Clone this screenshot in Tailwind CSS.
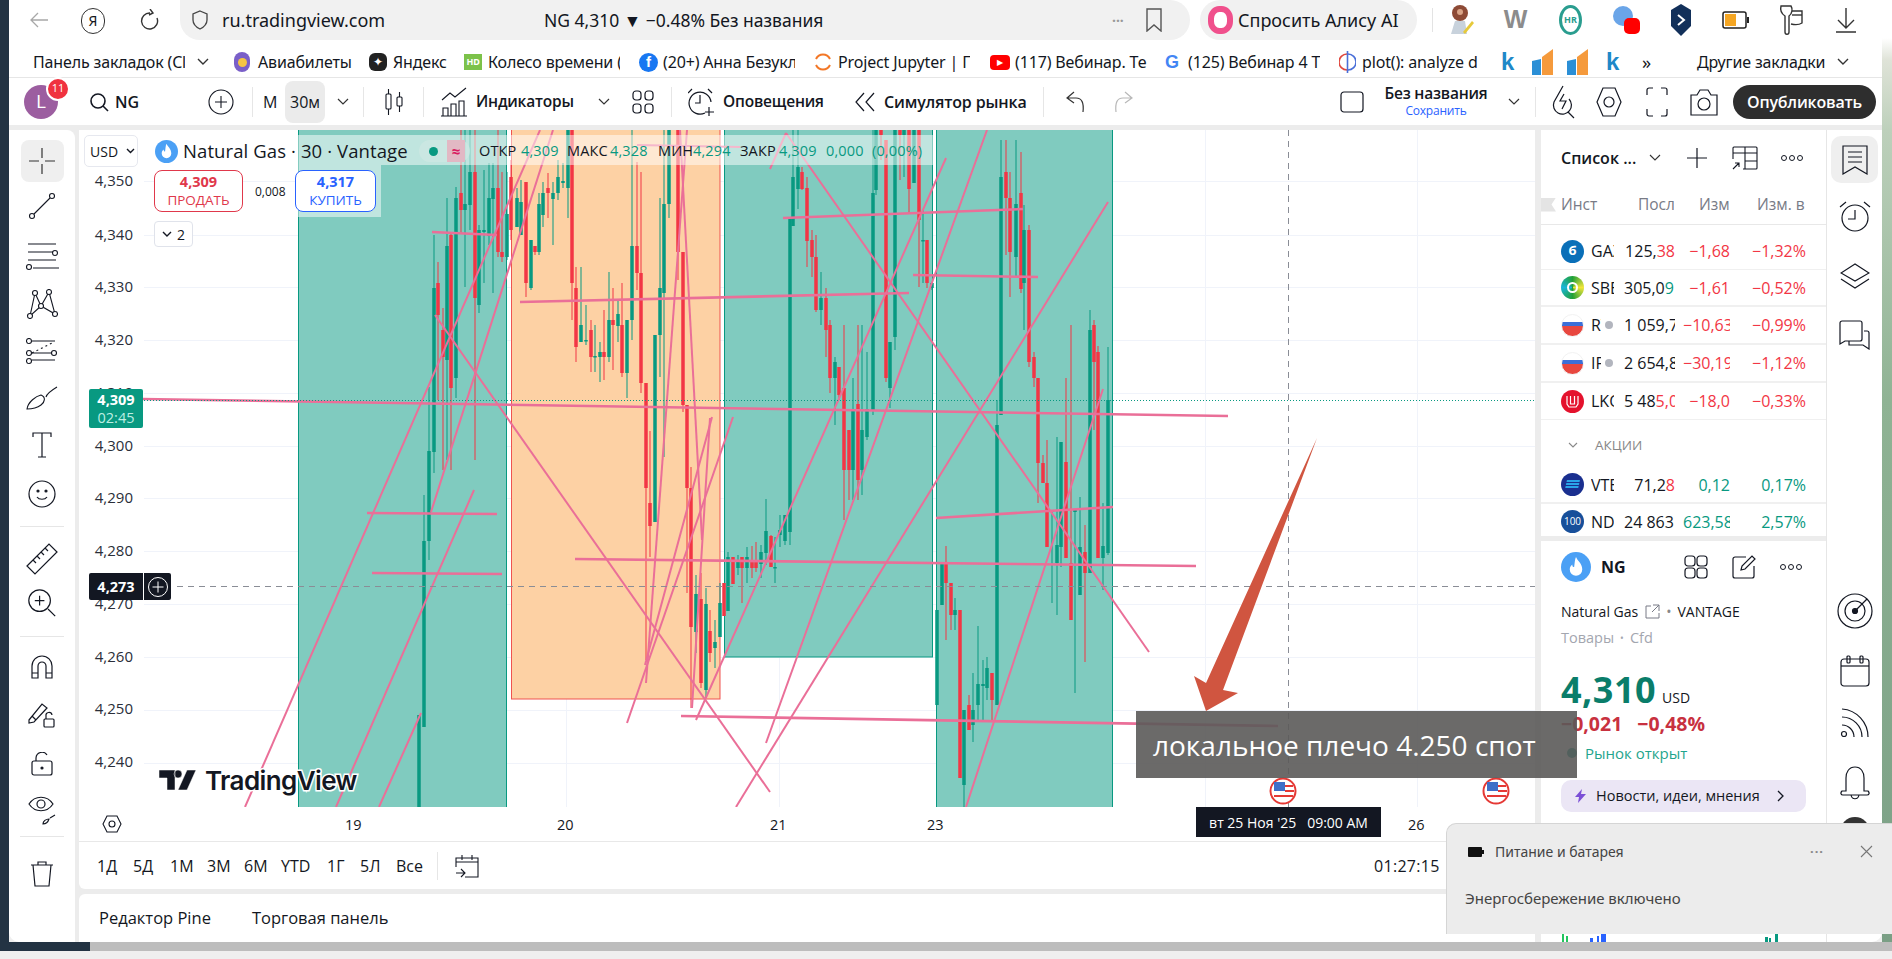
<!DOCTYPE html>
<html lang="ru">

<head>
  <meta charset="UTF-8">
  <title>NG 4,310</title>
  <script src="https://cdn.jsdelivr.net/npm/@tailwindcss/browser@4"></script>
</head>

<body class="relative w-[1892px] h-[959px] overflow-hidden bg-[#efefef] font-['Open_Sans',sans-serif] text-[#131722]">
  <div class="flex h-[942px]">
    <div class="w-[9px] bg-[#233343]"></div>

    <!-- browser window -->
    <div class="w-[1873px] flex flex-col bg-[#ececec] rounded-bl-[10px] rounded-br-[10px] overflow-hidden">
      <!-- tab row -->
      <div class="h-[45px] shrink-0 bg-white flex items-start font-['Noto_Sans',sans-serif]">
        <svg class="ml-[19px] mt-[10px] w-[22px] h-[20px]" viewBox="0 0 22 20" fill="none" stroke="#a8a8a8" stroke-width="1.3"><path d="M20 10H3M10 3l-7 7 7 7" /></svg>
        <div class="ml-[31px] mt-[8px] w-[24px] h-[26px] rounded-full border-[1.5px] border-[#333] flex items-center justify-center text-[14px] leading-none">Я</div>
        <svg class="ml-[35px] mt-[9px] w-[20px] h-[24px]" viewBox="0 0 20 24" fill="none" stroke="#333" stroke-width="1.4"><path d="M10 4a8 8 0 1 0 7 5M10 0l3 4-4 2" /></svg>
        <div class="ml-[20px] w-[1010px] h-[40px] rounded-r-[20px] rounded-bl-[20px] bg-[#f1f1f1] flex items-center">
          <svg class="ml-[12px] w-[16px] h-[20px]" viewBox="0 0 16 20" fill="none" stroke="#444" stroke-width="1.3"><path d="M8 1l7 3v6c0 4-3 7-7 9-4-2-7-5-7-9V4z" /></svg>
          <span class="ml-[14px] w-[322px] text-[18px]">ru.tradingview.com</span>
          <span class="w-[568px] text-[17.500px]">NG 4,310 ▼ −0.48% Без названия</span>
          <span class="w-[34px] text-[#999] text-[14px] font-bold">···</span>
          <svg class="w-[16px] h-[24px]" viewBox="0 0 16 24" fill="none" stroke="#555" stroke-width="1.4"><path d="M1 1h14v22l-7-6-7 6z" /></svg>
        </div>
        <div class="ml-[10px] w-[217px] h-[40px] rounded-[20px] bg-[#f1f1f1] flex items-center">
          <div class="ml-[8px] w-[25px] h-[28px] rounded-[45%] border-[6px] border-[#f0508c] bg-white"></div>
          <span class="ml-[5px] text-[18px] whitespace-nowrap">Спросить Алису AI</span>
        </div>
        <div class="ml-[15px] mt-[8px] w-px h-[24px] bg-[#e3e3e3]"></div>
        <div class="w-[55px] h-[40px] flex items-center justify-center"><svg class="w-[28px] h-[32px]" viewBox="0 0 28 32"><circle cx="13" cy="9" r="8" fill="#8d4a35" /><circle cx="13" cy="8" r="3" fill="#d9a487" /><path d="M4 30l4-13h10l2 13z" fill="#c8d2dc" /><path d="M16 28l9-11 2 2-9 11z" fill="#e6c93a" /></svg></div>
        <div class="w-[55px] h-[40px] flex items-center justify-center"><span class="text-[25px] font-bold text-[#8c8c8c] font-['Liberation_Sans',sans-serif]">W</span></div>
        <div class="w-[55px] h-[40px] flex items-center justify-center"><div class="w-[23px] h-[30px] rounded-[50%] border-[3px] border-[#2a9d8f] text-[9px] font-bold text-[#2a9d8f] flex items-center justify-center">HR</div></div>
        <div class="w-[55px] h-[40px] flex items-center justify-center"><svg class="w-[30px] h-[30px]" viewBox="0 0 30 30"><circle cx="12" cy="11" r="10" fill="#6aa5e8" /><rect x="13" y="13" width="16" height="16" rx="5" fill="#f00" /></svg></div>
        <div class="w-[55px] h-[40px] flex items-center justify-center"><svg class="w-[22px] h-[32px]" viewBox="0 0 22 32"><path d="M11 0l10 6v16l-10 10L1 22V6z" fill="#12305a" /><path d="M8 11l6 5-6 5" fill="none" stroke="#fff" stroke-width="2" /></svg></div>
        <div class="w-[55px] h-[40px] flex items-center justify-center"><svg class="w-[28px] h-[18px]" viewBox="0 0 28 18"><rect x="1" y="1" width="23" height="16" rx="2" fill="#fff" stroke="#222" stroke-width="1.5" /><rect x="3" y="3" width="11" height="12" fill="#f5a623" /><rect x="25" y="6" width="2" height="6" fill="#222" /></svg></div>
        <div class="w-[55px] h-[40px] flex items-center justify-center"><svg class="w-[26px] h-[32px]" viewBox="0 0 26 32" fill="none" stroke="#333" stroke-width="1.4"><path d="M3 2h10c2 3 1 8-2 10v16c0 3-4 3-4 0V12C4 10 2 6 3 2zM14 7h10v12c-3 2-7 2-11 1" /><path d="M14 11h10" /></svg></div>
        <div class="w-[55px] h-[40px] flex items-center justify-center"><svg class="w-[22px] h-[26px]" viewBox="0 0 22 26" fill="none" stroke="#333" stroke-width="1.4"><path d="M11 1v20M3 13l8 8 8-8M1 25h20" /></svg></div>
      </div>

      <!-- bookmarks -->
      <div class="h-[33px] pt-[2px] shrink-0 bg-white border-b border-[#e6e6e6] flex items-center text-[16px] font-['Noto_Sans',sans-serif] tracking-[-0.15px] whitespace-nowrap">
        <div class="w-[225px] pl-[24px] flex items-center"><span class="w-[152px] overflow-hidden">Панель закладок (Cl</span><svg class="ml-[12px] w-[12px] h-[8px]" viewBox="0 0 12 8" fill="none" stroke="#333" stroke-width="1.4"><path d="M1 1l5 5 5-5" /></svg></div>
        <div class="w-[135px] flex items-center gap-[8px]"><div class="w-[16px] h-[20px] rounded-full bg-[#7a5fc8] flex items-center justify-center"><div class="w-[9px] h-[9px] rounded-full bg-[#f5c542]"></div></div><span>Авиабилеты</span></div>
        <div class="w-[95px] flex items-center gap-[6px]"><div class="w-[18px] h-[18px] rounded-[6px] bg-[#222] text-white text-[12px] leading-none flex items-center justify-center">✦</div><span>Яндекс</span></div>
        <div class="w-[175px] flex items-center gap-[6px]"><div class="w-[18px] h-[16px] bg-[#7cc24a] text-white text-[9px] font-bold flex items-center justify-center">HD</div><span class="w-[132px] overflow-hidden">Колесо времени (</span></div>
        <div class="w-[175px] flex items-center gap-[5px]"><div class="w-[19px] h-[19px] rounded-full bg-[#1877f2] text-white text-[15px] font-bold flex items-center justify-center font-['Liberation_Sans',sans-serif]">f</div><span class="w-[132px] overflow-hidden">(20+) Анна Безукл</span></div>
        <div class="w-[176px] flex items-center gap-[6px]"><svg class="w-[18px] h-[20px]" viewBox="0 0 18 20" fill="none" stroke="#f37726" stroke-width="2"><path d="M2 7c3-6 11-6 14 0M2 13c3 6 11 6 14 0" /></svg><span class="w-[132px] overflow-hidden">Project Jupyter | П</span></div>
        <div class="w-[175px] flex items-center gap-[5px]"><div class="w-[20px] h-[15px] rounded-[4px] bg-[#f00] text-white text-[8px] flex items-center justify-center">▶</div><span class="w-[133px] overflow-hidden">(117) Вебинар. Те</span></div>
        <div class="w-[174px] flex items-center gap-[6px]"><span class="w-[17px] text-[18px] font-bold text-[#4285f4] leading-none font-['Liberation_Sans',sans-serif]">G</span><span class="w-[132px] overflow-hidden">(125) Вебинар 4 Т</span></div>
        <div class="w-[151px] flex items-center gap-[6px]"><svg class="w-[17px] h-[24px]" viewBox="0 0 17 24" fill="none" stroke-width="1.6"><path d="M8 4a8 8 0 0 0 0 16" stroke="#e0483e" /><path d="M9 4a8 8 0 0 1 0 16" stroke="#4a6fd8" /><path d="M8.500 1v22" stroke="#4a6fd8" /></svg><span class="w-[118px] overflow-hidden">plot(): analyze d</span></div>
        <div class="w-[35px] text-center text-[24px] font-bold text-[#1e88c8] leading-none font-['Liberation_Sans',sans-serif]">k</div>
        <div class="w-[35px] flex justify-center"><svg class="w-[22px] h-[26px]" viewBox="0 0 22 26"><path d="M0 12l9-2v16H0z" fill="#2b8fd6" /><path d="M10 26V8l11-8v26z" fill="#f59a3c" /></svg></div>
        <div class="w-[35px] flex justify-center"><svg class="w-[22px] h-[26px]" viewBox="0 0 22 26"><path d="M0 12l9-2v16H0z" fill="#2b8fd6" /><path d="M10 26V8l11-8v26z" fill="#f59a3c" /></svg></div>
        <div class="w-[35px] text-center text-[24px] font-bold text-[#1e88c8] leading-none font-['Liberation_Sans',sans-serif]">k</div>
        <div class="w-[67px] pl-[12px] text-[18px] leading-none">»</div>
        <div class="flex items-center gap-[6px]"><span class="w-[134px]">Другие закладки</span><svg class="w-[12px] h-[8px]" viewBox="0 0 12 8" fill="none" stroke="#333" stroke-width="1.4"><path d="M1 1l5 5 5-5" /></svg></div>
      </div>

      <!-- chart toolbar -->
      <div class="h-[47px] shrink-0 bg-white flex items-center text-[16px] font-semibold whitespace-nowrap">
        <div class="relative ml-[15px] w-[34px] h-[34px] rounded-full bg-[#9c5ea0] text-white text-[19px] font-normal flex items-center justify-center">L
          <div class="absolute left-[22px] top-[-8px] w-[24px] h-[24px] rounded-full bg-[#f0323f] border-[2px] border-white text-[11px] font-normal flex items-center justify-center">11</div>
        </div>
        <svg class="ml-[31px] w-[20px] h-[20px]" viewBox="0 0 20 20" fill="none" stroke="#131722" stroke-width="1.6"><circle cx="9" cy="9" r="7" /><path d="M14 14l5 5" /></svg>
        <span class="ml-[6px] w-[28px]">NG</span>
        <svg class="ml-[65px] w-[26px] h-[26px]" viewBox="0 0 26 26" fill="none" stroke="#131722" stroke-width="1.1"><circle cx="13" cy="13" r="12" /><path d="M13 7v12M7 13h12" /></svg>
        <div class="ml-[18px] w-px h-[30px] bg-[#e6e6e6]"></div>
        <span class="ml-[10px] w-[22px] font-normal">М</span>
        <div class="h-[42px] w-[40px] rounded-[8px] bg-[#ebebeb] flex items-center justify-center font-normal">30м</div>
        <svg class="ml-[12px] w-[12px] h-[8px]" viewBox="0 0 12 8" fill="none" stroke="#333" stroke-width="1.2"><path d="M1 1l5 5 5-5" /></svg>
        <div class="ml-[14px] w-px h-[30px] bg-[#e6e6e6]"></div>
        <svg class="ml-[20px] w-[20px] h-[30px]" viewBox="0 0 20 30" fill="none" stroke="#131722" stroke-width="1.1"><rect x="2" y="7" width="5" height="15" rx="1" /><path d="M4.500 2v5M4.500 22v6" /><rect x="13" y="10" width="5" height="9" rx="1" /><path d="M15.500 5v5M15.500 19v6" /></svg>
        <div class="ml-[19px] w-px h-[30px] bg-[#e6e6e6]"></div>
        <svg class="ml-[16px] w-[28px] h-[30px]" viewBox="0 0 28 30" fill="none" stroke="#131722" stroke-width="1.1"><path d="M2 13l8-7 5 4 11-9M3 29v-8h5v8zM11 29V17h5v12zM19 29V14h5v15zM1 29h26" /></svg>
        <span class="ml-[8px] w-[122px] font-semibold text-[15.5px] tracking-[-0.2px]">Индикаторы</span>
        <svg class="w-[12px] h-[8px]" viewBox="0 0 12 8" fill="none" stroke="#333" stroke-width="1.2"><path d="M1 1l5 5 5-5" /></svg>
        <svg class="ml-[22px] w-[22px] h-[26px]" viewBox="0 0 22 26" fill="none" stroke="#131722" stroke-width="1.2"><rect x="1" y="2" width="8" height="9" rx="3" /><rect x="13" y="2" width="8" height="9" rx="3" /><rect x="1" y="15" width="8" height="9" rx="3" /><rect x="13" y="15" width="8" height="9" rx="3" /></svg>
        <div class="ml-[17px] w-px h-[30px] bg-[#e6e6e6]"></div>
        <svg class="ml-[16px] w-[26px] h-[30px]" viewBox="0 0 26 30" fill="none" stroke="#131722" stroke-width="1.2"><path d="M17 26A11 11 0 1 1 23 15M12 8v8H7M4 2L0 6M20 2l4 4M21 20v9M17 25h9" /></svg>
        <span class="ml-[9px] w-[132px] text-[15.5px] tracking-[-0.2px]">Оповещения</span>
        <svg class="w-[20px] h-[22px]" viewBox="0 0 20 22" fill="none" stroke="#131722" stroke-width="1.2"><path d="M9 2L1 11l8 9M19 2l-8 9 8 9" /></svg>
        <span class="ml-[9px] w-[159px] text-[16px] tracking-[-0.15px]">Симулятор рынка</span>
        <div class="w-px h-[30px] bg-[#e6e6e6]"></div>
        <svg class="ml-[22px] w-[20px] h-[22px]" viewBox="0 0 20 22" fill="none" stroke="#333" stroke-width="1.2"><path d="M8 1L1 7l7 5M1 7h9c6 0 8 5 7 14" /></svg>
        <svg class="ml-[27px] w-[20px] h-[22px]" viewBox="0 0 20 22" fill="none" stroke="#b8b8b8" stroke-width="1.2"><path d="M12 1l7 6-7 5M19 7h-9C4 7 2 12 3 21" /></svg>
        <svg class="ml-[207px] w-[24px] h-[22px]" viewBox="0 0 24 22" fill="none" stroke="#131722" stroke-width="1.2"><rect x="1" y="1" width="22" height="20" rx="3" /></svg>
        <div class="ml-[19px] w-[106px] flex flex-col items-center leading-none">
          <span class="text-[15.5px] tracking-[-0.2px]">Без названия</span>
          <span class="mt-[3px] text-[12px] font-normal text-[#2962ff] tracking-[-0.2px]">Сохранить</span>
        </div>
        <svg class="ml-[19px] w-[12px] h-[8px]" viewBox="0 0 12 8" fill="none" stroke="#333" stroke-width="1.2"><path d="M1 1l5 5 5-5" /></svg>
        <div class="ml-[15px] w-px h-[30px] bg-[#e6e6e6]"></div>
        <svg class="ml-[15px] w-[24px] h-[34px]" viewBox="0 0 24 34" fill="none" stroke="#131722" stroke-width="1.2"><path d="M12 1L3 17a9 9 0 1 0 15-3M13 9l-4 7h6l-4 8M17 27l6 6" /></svg>
        <svg class="ml-[21px] w-[26px] h-[30px]" viewBox="0 0 26 30" fill="none" stroke="#131722" stroke-width="1.2"><path d="M7 1h12l6 14-6 14H7L1 15z" /><circle cx="13" cy="15" r="5" /></svg>
        <svg class="ml-[24px] w-[22px] h-[30px]" viewBox="0 0 22 30" fill="none" stroke="#131722" stroke-width="1.2"><path d="M1 8V3a2 2 0 0 1 2-2h4M15 1h4a2 2 0 0 1 2 2v5M21 22v5a2 2 0 0 1-2 2h-4M7 29H3a2 2 0 0 1-2-2v-5" /></svg>
        <svg class="ml-[22px] w-[28px] h-[30px]" viewBox="0 0 28 30" fill="none" stroke="#131722" stroke-width="1.2"><path d="M1 8h6l3-5h8l3 5h6v20H1z" /><circle cx="14" cy="17" r="6" /></svg>
        <div class="ml-[15px] w-[143px] h-[34px] rounded-[17px] bg-[#2e2e2e] text-white text-[16px] flex items-center justify-center tracking-[-0.2px]">Опубликовать</div>
      </div>

      <!-- main row -->
      <div class="flex flex-1 mt-[5px] min-h-0">
        <!-- drawing tools -->
        <div class="w-[66px] shrink-0 bg-white rounded-tr-[8px] flex flex-col items-center">
          <div class="mt-[10px] w-[43px] h-[42px] rounded-[8px] bg-[#efefef] flex items-center justify-center"><svg class="w-[28px] h-[28px]" viewBox="0 0 28 28" fill="none" stroke="#333" stroke-width="1.2"><path d="M14 1v10M14 17v10M1 14h10M17 14h10" /></svg></div>
          <svg class="mt-[9px] w-[30px] h-[30px]" viewBox="0 0 30 30" fill="none" stroke="#131722" stroke-width="1.1"><circle cx="5" cy="25" r="2.500" /><circle cx="25" cy="5" r="2.500" /><path d="M7 23L23 7" /></svg>
          <svg class="mt-[20px] w-[34px] h-[30px]" viewBox="0 0 34 30" fill="none" stroke="#131722" stroke-width="1.1"><path d="M3 3h28M3 11h26M3 19h28M8 27h26" /><circle cx="30" cy="12" r="2.500" fill="#fff" /><circle cx="4" cy="26" r="2.500" fill="#fff" /></svg>
          <svg class="mt-[18px] w-[32px] h-[30px]" viewBox="0 0 32 30" fill="none" stroke="#131722" stroke-width="1.1"><path d="M4 27L9 4l6 13 8-14 6 22-14-8z" /><circle cx="4" cy="27" r="2.500" fill="#fff" /><circle cx="9" cy="4" r="2.500" fill="#fff" /><circle cx="15" cy="17" r="2.500" fill="#fff" /><circle cx="23" cy="3" r="2.500" fill="#fff" /><circle cx="29" cy="25" r="2.500" fill="#fff" /></svg>
          <svg class="mt-[19px] w-[32px] h-[28px]" viewBox="0 0 32 28" fill="none" stroke="#131722" stroke-width="1.1"><path d="M6 3h23M6 22h23M6 15h20" /><path d="M6 15l22-11" stroke-dasharray="2 3" /><circle cx="3" cy="3" r="2.500" fill="#fff" /><circle cx="3" cy="15" r="2.500" fill="#fff" /><circle cx="28" cy="15" r="2.500" fill="#fff" /><circle cx="3" cy="23" r="2.500" fill="#fff" /></svg>
          <svg class="mt-[20px] w-[32px] h-[24px]" viewBox="0 0 32 24" fill="none" stroke="#131722" stroke-width="1.1"><path d="M1 23c1-7 9-13 14-14 5 2 4 7 0 10-4 3-9 4-14 4zM20 11c1-4 6-7 11-10" /></svg>
          <svg class="mt-[22px] w-[22px] h-[26px]" viewBox="0 0 22 26" fill="none" stroke="#131722" stroke-width="1.2"><path d="M2 5V1h18v4M11 1v24M7 25h8" /></svg>
          <svg class="mt-[22px] w-[28px] h-[28px]" viewBox="0 0 28 28" fill="none" stroke="#131722" stroke-width="1.2"><circle cx="14" cy="14" r="13" /><circle cx="10" cy="11" r="1" fill="#131722" /><circle cx="18" cy="11" r="1" fill="#131722" /><path d="M9 17c2 3 8 3 10 0" /></svg>
          <div class="mt-[18px] w-[44px] h-px bg-[#e6e6e6]"></div>
          <svg class="mt-[16px] w-[32px] h-[32px]" viewBox="0 0 32 32" fill="none" stroke="#131722" stroke-width="1.2"><path d="M1 23L23 1l8 8L9 31zM7 17l3 3M11 13l3 3M15 9l3 3M19 5l3 3" /></svg>
          <svg class="mt-[16px] w-[24px] h-[24px] scale-[1.2]" viewBox="0 0 24 24" fill="none" stroke="#131722" stroke-width="1"><circle cx="10" cy="10" r="9" /><path d="M10 6v8M6 10h8M17 17l6 6" /></svg>
          <div class="mt-[21px] w-[44px] h-px bg-[#e6e6e6]"></div>
          <svg class="mt-[18px] w-[22px] h-[24px]" viewBox="0 0 22 24" fill="none" stroke="#131722" stroke-width="1.2"><path d="M1 23V11a10 10 0 0 1 20 0v12h-6V11a4 4 0 0 0-8 0v12zM1 18h6M15 18h6" /></svg>
          <svg class="mt-[22px] w-[28px] h-[28px]" viewBox="0 0 28 28" fill="none" stroke="#131722" stroke-width="1.2"><path d="M1 19L14 3l5 4-13 14-5 1zM4 15l4 4" /><rect x="16" y="18" width="10" height="8" rx="1" /><path d="M18 18v-3a3 3 0 0 1 6-1" /></svg>
          <svg class="mt-[23px] w-[22px] h-[24px]" viewBox="0 0 22 24" fill="none" stroke="#131722" stroke-width="1.2"><rect x="1" y="9" width="20" height="14" rx="2" /><path d="M5 9V6a6 6 0 0 1 11-3" /><circle cx="11" cy="16" r="1" fill="#131722" /></svg>
          <svg class="mt-[19px] w-[28px] h-[30px]" viewBox="0 0 28 30" fill="none" stroke="#131722" stroke-width="1.2"><path d="M1 9c6-9 18-9 24 0-6 9-18 9-24 0z" /><circle cx="13" cy="9" r="4" /><path d="M15 29c0-3 3-5 6-5-1 3-3 5-6 5zM22 23l5-3" /></svg>
          <div class="mt-[11px] w-[44px] h-px bg-[#e6e6e6]"></div>
          <svg class="mt-[24px] w-[24px] h-[26px]" viewBox="0 0 24 26" fill="none" stroke="#131722" stroke-width="1.2"><path d="M1 4h22M8 4V1h8v3M3 4l2 21h14l2-21" /></svg>
        </div>

        <!-- chart column -->
        <div class="w-[1456px] ml-[4px] shrink-0 flex flex-col">
          <div class="bg-white rounded-b-[6px]">
            <div class="relative h-[677px] overflow-hidden">
              <svg id="chart" class="absolute inset-0 w-[1456px] h-[677px]" viewBox="79 130 1456 677">
                <g id="grid" stroke="#f0f3fa"></g>
                <g id="boxes"></g>
                <g id="candles"></g>
                <g id="lines" stroke="#ea6f98" fill="none"></g>
                <path d="M144 400.500H1535" stroke="#089981" stroke-dasharray="1 2" />
                <path d="M177 586.500H1535M1288.500 130V807" stroke="#8a8d96" stroke-dasharray="6 5" />
                <g id="flags"></g>
                <g class="text-[15px]" fill="#2a2e39" text-anchor="end">
                  <text x="133" y="186">4,350</text>
                  <text x="133" y="240">4,340</text>
                  <text x="133" y="292">4,330</text>
                  <text x="133" y="345">4,320</text>
                  <text x="133" y="398">4,310</text>
                  <text x="133" y="451">4,300</text>
                  <text x="133" y="503">4,290</text>
                  <text x="133" y="556">4,280</text>
                  <text x="133" y="609">4,270</text>
                  <text x="133" y="662">4,260</text>
                  <text x="133" y="714">4,250</text>
                  <text x="133" y="767">4,240</text>
                </g>
                <path d="M159 770h16v20h-8v-12h-8zM178 770a4 4 0 1 1 0 8 4 4 0 0 1 0-8zM187 770h9l-9 20h-9z" fill="#131722" stroke="#fff" stroke-width="0.5" />
                <text x="205" y="790" class="text-[26px] font-semibold tracking-[-0.6px] font-['Inter',sans-serif]" fill="#131722" stroke="#fff" stroke-width="3" paint-order="stroke">TradingView</text>
              </svg>

              <!-- legend -->
              <div class="absolute left-[219px] top-[5px] w-[635px] h-[30px] bg-white/50"></div>
              <div class="absolute left-[219px] top-[35px] w-[83px] h-[52px] bg-white/50"></div>
              <div class="absolute left-[5px] top-[5px] w-[54px] h-[32px] rounded-[5px] border border-[#e6e8ef] bg-white flex items-center pl-[5px] gap-[8px] text-[14px]">USD<svg class="w-[9px] h-[6px]" viewBox="0 0 9 6" fill="none" stroke="#131722" stroke-width="1.4"><path d="M1 1l3.500 3.500L8 1" /></svg></div>
              <div class="absolute left-[76px] top-[7px] h-[28px] flex items-center whitespace-nowrap">
                <svg class="w-[23px] h-[23px]" viewBox="0 0 24 24"><circle cx="12" cy="12" r="12" fill="#4ba0f5" /><path d="M12 4c1 3 5 5 5 10a5 5 0 0 1-10 0c0-2 1-3 2-4 0 2 1 2 1.500 2C11 9 11 6 12 4z" fill="#fff" /></svg>
                <span class="ml-[5px] w-[226px] text-[18.500px] tracking-[0.1px]">Natural Gas · 30 · Vantage</span>
                <div class="ml-[10px] w-[51px] h-[22px] rounded-[11px] bg-[#cfe8e3]/70 flex items-center pl-[10px]">
                  <div class="w-[9px] h-[9px] rounded-full bg-[#089981]"></div>
                  <div class="ml-[9px] w-[18px] h-[22px] bg-[#e2b8c4] text-center text-[#d81b60] text-[15px] font-bold leading-[22px]">≈</div>
                </div>
                <div class="ml-[9px] flex text-[14.500px] text-[#089981] tracking-[0.15px]">
                  <span class="w-[42px] text-[#131722]">ОТКР</span><span class="w-[46px]">4,309</span><span class="w-[43px] text-[#131722]">МАКС</span><span class="w-[48px]">4,328</span><span class="w-[35px] text-[#131722]">МИН</span><span class="w-[47px]">4,294</span><span class="w-[39px] text-[#131722]">ЗАКР</span><span class="w-[47px]">4,309</span><span class="w-[46px]">0,000</span><span>(0,00%)</span>
                </div>
              </div>

              <!-- trade buttons -->
              <div class="absolute left-[75px] top-[40px] w-[89px] h-[42px] rounded-[8px] border border-[#e0384b] bg-white flex flex-col items-center justify-center text-[#e0384b] leading-[19px]"><b class="text-[14.500px]">4,309</b><span class="text-[13.500px]">ПРОДАТЬ</span></div>
              <div class="absolute left-[176px] top-[53px] text-[12px]">0,008</div>
              <div class="absolute left-[216px] top-[40px] w-[81px] h-[42px] rounded-[8px] border border-[#2962ff] bg-white flex flex-col items-center justify-center text-[#2962ff] leading-[19px]"><b class="text-[14.500px]">4,317</b><span class="text-[13.500px]">КУПИТЬ</span></div>
              <div class="absolute left-[75px] top-[91px] w-[39px] h-[26px] rounded-[4px] border border-[#e0e3eb] bg-white flex items-center justify-center gap-[5px] text-[14px]"><svg class="w-[10px] h-[6px]" viewBox="0 0 10 6" fill="none" stroke="#131722" stroke-width="1.4"><path d="M1 1l4 4 4-4" /></svg>2</div>

              <!-- price tags -->
              <div class="absolute left-[10px] top-[259px] w-[54px] h-[39px] rounded-[2px] bg-[#089981] flex flex-col items-center justify-center leading-[18px] text-[14.500px] text-white"><b>4,309</b><span class="text-[#bdeee3]">02:45</span></div>
              <div class="absolute left-[10px] top-[443px] w-[54px] h-[27px] rounded-l-[2px] bg-[#131722] text-white text-[14.500px] font-bold flex items-center justify-center">4,273</div>
              <div class="absolute left-[65px] top-[443px] w-[27px] h-[27px] rounded-r-[2px] bg-[#131722] flex items-center justify-center"><svg class="w-[20px] h-[20px]" viewBox="0 0 20 20" fill="none" stroke="#fff"><circle cx="10" cy="10" r="9.500" /><path d="M10 4.500v11M4.500 10h11" /></svg></div>
            </div>

            <!-- time axis -->
            <div class="relative h-[35px] border-b border-[#e8e8e8] text-[14.500px]">
              <svg class="absolute left-[23px] top-[8px] w-[20px] h-[18px]" viewBox="0 0 20 18" fill="none" stroke="#131722" stroke-width="1.1"><path d="M5 1h10l4 8-4 8H5L1 9z" /><circle cx="10" cy="9" r="3" /></svg>
              <span class="absolute left-[266px] top-[7px]">19</span>
              <span class="absolute left-[478px] top-[7px]">20</span>
              <span class="absolute left-[691px] top-[7px]">21</span>
              <span class="absolute left-[848px] top-[7px]">23</span>
              <span class="absolute left-[1329px] top-[7px]">26</span>
              <div class="absolute left-[1117px] top-0 w-[185px] h-[30px] bg-[#131722] text-white text-[14px] flex items-center justify-center whitespace-pre">вт 25 Ноя '25   09:00 AM</div>
            </div>

            <!-- range row -->
            <div class="h-[47px] flex items-center text-[16px] pl-[18px]">
              <span class="w-[36px]">1Д</span><span class="w-[37px]">5Д</span><span class="w-[37px]">1М</span><span class="w-[37px]">3М</span><span class="w-[37px]">6М</span><span class="w-[46px]">YTD</span><span class="w-[33px]">1Г</span><span class="w-[36px]">5Л</span><span class="w-[41px]">Все</span>
              <div class="w-px h-[28px] bg-[#e6e6e6]"></div>
              <svg class="ml-[17px] w-[24px] h-[24px]" viewBox="0 0 24 24" fill="none" stroke="#131722" stroke-width="1.1"><path d="M1 13V4h22v19H10M1 8h22M7 1v5M17 1v5M1 19h9M6 15l4 4-4 4" /></svg>
              <span class="ml-[895px] tracking-[0.3px]">01:27:15</span>
            </div>
          </div>
          <div class="mt-[5px] flex-1 bg-white rounded-t-[6px] flex items-center pl-[20px] gap-[41px] text-[16.500px]">
            <span>Редактор Pine</span><span>Торговая панель</span>
          </div>
        </div>

        <!-- watchlist + details -->
        <div class="relative w-[285px] ml-[6px] shrink-0 flex flex-col bg-white text-[16px] whitespace-nowrap">
          <div class="h-[55px] pl-[20px] flex items-center">
            <b class="w-[88px] text-[16px] font-semibold">Список ...</b>
            <svg class="w-[12px] h-[8px]" viewBox="0 0 12 8" fill="none" stroke="#333" stroke-width="1.1"><path d="M1 1l5 5 5-5" /></svg>
            <svg class="ml-[25px] w-[22px] h-[22px]" viewBox="0 0 22 22" fill="none" stroke="#131722" stroke-width="1.2"><path d="M11 1v20M1 11h20" /></svg>
            <svg class="ml-[24px] w-[26px] h-[24px]" viewBox="0 0 26 24" fill="none" stroke="#131722" stroke-width="1.1"><path d="M1 13V2a1 1 0 0 1 1-1h22a1 1 0 0 1 1 1v20a1 1 0 0 1-1 1H11M1 7h24M13 1v22M13 15h12M1 23l6-6M3 17h4v4" /></svg>
            <div class="ml-[23px] flex gap-[2px]"><div class="w-[6px] h-[6px] rounded-full border border-[#131722]"></div><div class="w-[6px] h-[6px] rounded-full border border-[#131722]"></div><div class="w-[6px] h-[6px] rounded-full border border-[#131722]"></div></div>
          </div>
          <div class="relative h-[40px] border-b border-[#e8e8e8] flex items-center text-[15.500px] text-[#787b86]">
            <div class="w-[15px] h-[14px] bg-[#e4e4e4] [clip-path:polygon(0_0,100%_0,70%_50%,100%_100%,0_100%)]"></div>
            <span class="ml-[5px] w-[40px]">Инст</span>
            <span class="ml-[37px] w-[36px] overflow-hidden">Посл</span>
            <span class="ml-[25px] w-[32px] overflow-hidden">Изм</span>
            <span class="ml-[26px] w-[50px] overflow-hidden">Изм. в</span>
          </div>

          <div class="h-[8px]"></div>
          <div class="flex items-center h-[37px] border-b border-[#f0f0f0] pl-[20px]">
            <div class="w-[23px] h-[23px] rounded-full bg-[#0a6fb8] text-white text-[13px] font-bold flex items-center justify-center">б</div>
            <span class="ml-[7px] w-[23px] overflow-hidden">GAZP</span>
            <span class="ml-[10px] w-[51px] overflow-hidden text-right">125,<span class="text-[#f23645]">38</span></span>
            <span class="w-[55px] overflow-hidden text-right text-[#f23645]">−1,68</span>
            <span class="w-[76px] overflow-hidden text-right text-[#f23645]">−1,32%</span>
          </div>
          <div class="flex items-center h-[37px] border-b-[2px] border-[#f0f0f0] pl-[20px]">
            <div class="w-[23px] h-[23px] rounded-full bg-[conic-gradient(#21a038,#f2e63a,#21a038,#19b5d8,#21a038)] flex items-center justify-center"><div class="w-[11px] h-[11px] rounded-full border-[2px] border-white"></div></div>
            <span class="ml-[7px] w-[23px] overflow-hidden">SBER</span>
            <span class="ml-[10px] w-[51px] overflow-hidden text-left">305,0<span class="text-[#089981]">9</span></span>
            <span class="w-[55px] overflow-hidden text-right text-[#f23645]">−1,61</span>
            <span class="w-[76px] overflow-hidden text-right text-[#f23645]">−0,52%</span>
          </div>
          <div class="flex items-center h-[38px] border-b-[2px] border-[#f0f0f0] pl-[20px]">
            <div class="w-[23px] h-[23px] rounded-full bg-[linear-gradient(#fff_33%,#3b6fd8_33%,#3b6fd8_50%,#e8473f_50%)] border border-[#f2f2f2]"></div>
            <span class="ml-[7px] w-[10px] overflow-hidden">RT</span>
            <div class="ml-[4px] w-[8px] h-[8px] rounded-full bg-[#b2b5be]"></div>
            <span class="ml-[11px] w-[51px] overflow-hidden text-left">1 059,7</span>
            <span class="w-[55px] overflow-hidden text-left text-[#f23645] pl-[8px]">−10,63</span>
            <span class="w-[76px] overflow-hidden text-right text-[#f23645]">−0,99%</span>
          </div>
          <div class="flex items-center h-[38px] border-b-[2px] border-[#f0f0f0] pl-[20px]">
            <div class="w-[23px] h-[23px] rounded-full bg-[linear-gradient(#fff_33%,#3b6fd8_33%,#3b6fd8_50%,#e8473f_50%)] border border-[#f2f2f2]"></div>
            <span class="ml-[7px] w-[10px] overflow-hidden">IF</span>
            <div class="ml-[4px] w-[8px] h-[8px] rounded-full bg-[#b2b5be]"></div>
            <span class="ml-[11px] w-[51px] overflow-hidden text-left">2 654,8</span>
            <span class="w-[55px] overflow-hidden text-left text-[#f23645] pl-[8px]">−30,19</span>
            <span class="w-[76px] overflow-hidden text-right text-[#f23645]">−1,12%</span>
          </div>
          <div class="flex items-center h-[37px] border-b border-[#f0f0f0] pl-[20px]">
            <div class="w-[23px] h-[23px] rounded-full bg-[#e4122d] flex items-center justify-center"><svg class="w-[13px] h-[13px]" viewBox="0 0 13 13" fill="none" stroke="#fff" stroke-width="1.2"><path d="M1 1v8l2 3h7l2-3V1M4.500 1v8h4V1" /></svg></div>
            <span class="ml-[7px] w-[23px] overflow-hidden">LKOH</span>
            <span class="ml-[10px] w-[51px] overflow-hidden text-left">5 48<span class="text-[#f23645]">5,0</span></span>
            <span class="w-[55px] overflow-hidden text-right text-[#f23645]">−18,0</span>
            <span class="w-[76px] overflow-hidden text-right text-[#f23645]">−0,33%</span>
          </div>
          <div class="h-[47px] pl-[27px] pt-[3px] flex items-center text-[13.500px] text-[#888]">
            <svg class="w-[10px] h-[6px]" viewBox="0 0 10 6" fill="none" stroke="#888" stroke-width="1.1"><path d="M1 1l4 4 4-4" /></svg>
            <span class="ml-[17px]">АКЦИИ</span>
          </div>
          <div class="flex items-center h-[37px] border-b-[2px] border-[#f0f0f0] pl-[20px]">
            <div class="w-[23px] h-[23px] rounded-full bg-[#1a2f8f] flex items-center justify-center"><div class="w-[13px] h-[9px] bg-[repeating-linear-gradient(#29a4e8_0,#29a4e8_2px,#1a2f8f_2px,#1a2f8f_3px)] -skew-x-12"></div></div>
            <span class="ml-[7px] w-[23px] overflow-hidden">VTBR</span>
            <span class="ml-[10px] w-[51px] overflow-hidden text-right">71,2<span class="text-[#f23645]">8</span></span>
            <span class="w-[55px] overflow-hidden text-right text-[#089981]">0,12</span>
            <span class="w-[76px] overflow-hidden text-right text-[#089981]">0,17%</span>
          </div>
          <div class="flex items-start h-[32px] pl-[20px] pt-[6px]">
            <div class="w-[23px] h-[23px] rounded-full bg-[#174f9a] text-white text-[10px] flex items-center justify-center">100</div>
            <span class="ml-[7px] w-[23px] overflow-hidden">NDX</span>
            <span class="ml-[10px] w-[51px] overflow-hidden text-left">24 863</span>
            <span class="w-[55px] overflow-hidden text-left text-[#089981] pl-[8px]">623,58</span>
            <span class="w-[76px] overflow-hidden text-right text-[#089981]">2,57%</span>
          </div>
          <div class="h-[5px] bg-[#ececec] shrink-0"></div>

          <!-- details -->
          <div class="h-[50px] mt-[1px] pl-[20px] flex items-center">
            <svg class="w-[30px] h-[30px]" viewBox="0 0 24 24"><circle cx="12" cy="12" r="12" fill="#4ba0f5" /><path d="M12 4c1 3 5 5 5 10a5 5 0 0 1-10 0c0-2 1-3 2-4 0 2 1 2 1.500 2C11 9 11 6 12 4z" fill="#fff" /></svg>
            <b class="ml-[10px] w-[83px] text-[16px] font-bold">NG</b>
            <svg class="w-[24px] h-[24px]" viewBox="0 0 24 24" fill="none" stroke="#131722" stroke-width="1.2"><rect x="1" y="1" width="10" height="10" rx="3" /><rect x="13" y="1" width="10" height="10" rx="3" /><rect x="1" y="13" width="10" height="10" rx="3" /><rect x="13" y="13" width="10" height="10" rx="3" /></svg>
            <svg class="ml-[24px] w-[24px] h-[24px]" viewBox="0 0 24 24" fill="none" stroke="#131722" stroke-width="1.2"><path d="M14 2H3a2 2 0 0 0-2 2v17a2 2 0 0 0 2 2h17a2 2 0 0 0 2-2V11M9 15l1-4L20 1l3 3-10 10z" /></svg>
            <div class="ml-[24px] flex gap-[2px]"><div class="w-[6px] h-[6px] rounded-full border border-[#131722]"></div><div class="w-[6px] h-[6px] rounded-full border border-[#131722]"></div><div class="w-[6px] h-[6px] rounded-full border border-[#131722]"></div></div>
          </div>
          <div class="pl-[20px] mt-[8px] h-[22px] flex items-center text-[14px]">Natural Gas<svg class="ml-[7px] w-[15px] h-[15px]" viewBox="0 0 15 15" fill="none" stroke="#787b86"><path d="M6 2H1v12h13V9M8 1h6v6M14 1L7 8" /></svg><span class="mx-[6px] text-[#888]">•</span>VANTAGE</div>
          <div class="pl-[20px] mt-[5px] h-[22px] flex items-center text-[14.500px] text-[#a3a6af]">Товары<span class="mx-[6px] text-[10px]">•</span>Cfd</div>
          <div class="pl-[20px] mt-[14px] h-[46px] flex items-baseline"><b class="text-[36px] font-bold text-[#0a7d6a] tracking-[0.5px]">4,310</b><span class="ml-[6px] text-[14px]">USD</span></div>
          <div class="pl-[20px] mt-[3px] h-[24px] flex items-center gap-[15px] text-[19.500px] font-bold text-[#c8313f]"><span>−0,021</span><span>−0,48%</span></div>
          <div class="pl-[26px] mt-[4px] h-[26px] flex items-center text-[#1fa58d] text-[15px]"><div class="w-[10px] h-[10px] rounded-full bg-[#089981]"></div><span class="ml-[8px]">Рынок открыт</span></div>
          <div class="ml-[20px] mt-[14px] w-[245px] h-[32px] rounded-[10px] bg-[#ebe6f5] flex items-center text-[14.500px]">
            <svg class="ml-[14px] w-[11px] h-[14px]" viewBox="0 0 11 14" fill="#7b4fd6"><path d="M7 0L0 8h4l-1 6 8-9H6z" /></svg>
            <span class="ml-[10px] w-[175px]">Новости, идеи, мнения</span>
            <svg class="ml-[6px] w-[7px] h-[12px]" viewBox="0 0 7 12" fill="none" stroke="#131722" stroke-width="1.3"><path d="M1 1l5 5-5 5" /></svg>
          </div>
          <!-- sliver of the mini chart showing under the notification -->
          <svg class="absolute left-0 bottom-0 w-[285px] h-[8px]" viewBox="0 0 285 8"><path d="M21 0h2v8h-2zM25 2h2v6h-2z" fill="#22c55e" /><path d="M49 4h3v4h-3zM56 2h2v6h-2zM60 0h5v8h-5z" fill="#2962ff" /><path d="M224 3h3v5h-3zM228 4h2v4h-2zM234 0h3v8h-3z" fill="#089981" /></svg>
        </div>

        <!-- right rail -->
        <div class="flex-1 bg-white border-l border-[#e6e6e6] flex flex-col items-center">
          <div class="mt-[6px] w-[47px] h-[47px] rounded-[10px] bg-[#efefef] flex items-center justify-center"><svg class="w-[26px] h-[30px]" viewBox="0 0 26 30" fill="none" stroke="#131722" stroke-width="1.2"><path d="M1 1h24v28l-12-7-12 7zM6 7h14M6 12h14M6 17h14" /></svg></div>
          <svg class="mt-[17px] w-[32px] h-[32px]" viewBox="0 0 32 32" fill="none" stroke="#131722" stroke-width="1.2"><circle cx="16" cy="18" r="13" /><path d="M16 10v9h-7M1 7l6-5M31 7l-6-5" /></svg>
          <svg class="mt-[31px] w-[30px] h-[26px]" viewBox="0 0 30 26" fill="none" stroke="#131722" stroke-width="1.2"><path d="M15 1L1 10l14 8 14-8zM1 16l14 9 14-9" /></svg>
          <svg class="mt-[31px] w-[31px] h-[30px]" viewBox="0 0 31 30" fill="none" stroke="#131722" stroke-width="1.2"><path d="M1 24V3a2 2 0 0 1 2-2h18a2 2 0 0 1 2 2v16a2 2 0 0 1-2 2H6l-5 3zM25 11h3a2 2 0 0 1 2 2v16l-6-4H10v-4" /></svg>
          <svg class="mt-[243px] w-[36px] h-[36px]" viewBox="0 0 36 36" fill="none" stroke="#131722" stroke-width="1.2"><circle cx="18" cy="18" r="17" /><circle cx="18" cy="18" r="10" /><circle cx="18" cy="18" r="2.500" fill="#131722" /><path d="M18 18l12-12" /></svg>
          <svg class="mt-[26px] w-[30px] h-[32px]" viewBox="0 0 30 32" fill="none" stroke="#131722" stroke-width="1.2"><rect x="1" y="4" width="28" height="27" rx="3" /><path d="M1 11h28" /><rect x="7" y="1" width="3" height="7" rx="1" /><rect x="20" y="1" width="3" height="7" rx="1" /></svg>
          <svg class="mt-[21px] w-[30px] h-[30px]" viewBox="0 0 30 30" fill="none" stroke="#131722" stroke-width="1.2"><circle cx="4" cy="26" r="2.500" /><path d="M2 17a12 12 0 0 1 12 12M2 9a20 20 0 0 1 20 20M2 1a28 28 0 0 1 26 28" /></svg>
          <svg class="mt-[28px] w-[30px] h-[34px]" viewBox="0 0 30 34" fill="none" stroke="#131722" stroke-width="1.2"><path d="M15 1C9 1 6 6 6 12v13H2c-2 2-1 4 1 4h24c2 0 3-2 1-4h-4V12c0-6-3-11-9-11zM11 29c1 5 7 5 8 0" /></svg>
          <div class="mt-[17px] w-[30px] h-[30px] shrink-0 rounded-full bg-[#333]"></div>
        </div>
      </div>
    </div>

    <div class="w-[10px] bg-[linear-gradient(#ffffff_0,#ffffff_38px,#dfe3d8_60px,#bdd0bb_130px,#8fb394_400px,#7a9f85_100%)]"></div>
  </div>

  <!-- taskbar shadow strip under the window -->
  <div class="flex h-[9px]">
    <div class="w-[90px] bg-[#233343]"></div>
    <div class="flex-1 bg-[#bdbdbd]"></div>
  </div>

  <!-- annotation pasted over the screenshot -->
  <svg class="absolute left-[1190px] top-[435px] w-[130px] h-[280px]" viewBox="1190 435 130 280">
    <path d="M1317 438L1223 690l15 3-32 18-12-35 12 7z" fill="#d05540" />
  </svg>
  <div class="absolute left-[1136px] top-[711px] w-[441px] h-[67px] bg-[#5b5a59]/90 pl-[17px] flex items-center text-[28px] text-white whitespace-nowrap">локальное плечо 4.250 спот</div>

  <!-- windows notification -->
  <div class="absolute left-[1446px] top-[823px] w-[446px] h-[111px] rounded-tl-[10px] bg-[#ececec] border-t border-l border-[#d5d5d5] font-['Noto_Sans',sans-serif] text-[#444]">
    <div class="flex items-center h-[55px] pl-[20px] text-[14px]">
      <svg class="w-[18px] h-[12px]" viewBox="0 0 18 12"><rect x="1" y="1" width="14" height="10" rx="1" fill="#111" /><rect x="15" y="4" width="2" height="4" fill="#111" /></svg>
      <span class="ml-[10px] w-[315px]">Питание и батарея</span>
      <span class="w-[50px] text-[#888] font-bold tracking-[1px] text-[13px]">···</span>
      <svg class="w-[13px] h-[13px]" viewBox="0 0 13 13" fill="none" stroke="#777" stroke-width="1.1"><path d="M1 1l11 11M12 1L1 12" /></svg>
    </div>
    <div class="pl-[18px] mt-[8px] text-[15px]">Энергосбережение включено</div>
  </div>

  <script>
    // [x, wick top, wick bottom, body top, body bottom, colour]
    const CANDLES = [
      [419, 715, 807, 715, 807, 'g'], [424, 495, 727, 541, 727, 'g'], [429, 387, 560, 451, 541, 'g'],
      [434, 235, 473, 288, 452, 'g'], [438, 262, 400, 283, 315, 'r'], [443, 308, 470, 330, 357, 'r'],
      [447, 198, 460, 246, 360, 'g'], [451, 232, 470, 235, 388, 'r'], [456, 187, 398, 198, 378, 'g'],
      [461, 130, 233, 193, 210, 'r'], [465, 130, 287, 204, 210, 'g'], [470, 130, 230, 172, 205, 'g'],
      [475, 130, 460, 172, 298, 'r'], [479, 225, 313, 230, 305, 'g'], [484, 170, 283, 230, 232, 'g'],
      [489, 163, 245, 198, 236, 'g'], [493, 163, 293, 188, 199, 'g'], [498, 130, 257, 188, 252, 'r'],
      [502, 172, 262, 252, 257, 'r'], [507, 172, 260, 214, 257, 'g'], [511, 160, 240, 177, 230, 'r'],
      [517, 188, 227, 198, 227, 'g'], [521, 180, 235, 202, 235, 'g'], [526, 182, 297, 182, 283, 'r'],
      [531, 240, 290, 240, 288, 'g'], [535, 246, 255, 246, 252, 'r'], [539, 193, 255, 204, 252, 'g'],
      [543, 182, 227, 193, 215, 'g'], [548, 173, 218, 188, 193, 'r'], [553, 182, 245, 193, 199, 'g'],
      [558, 160, 200, 177, 193, 'g'], [563, 163, 188, 181, 183, 'g'], [568, 130, 218, 130, 188, 'g'],
      [572, 130, 320, 130, 283, 'r'], [576, 267, 362, 288, 347, 'r'], [581, 267, 342, 325, 342, 'g'],
      [586, 305, 345, 340, 341, 'g'], [591, 320, 372, 330, 357, 'r'], [595, 325, 372, 356, 357, 'g'],
      [600, 342, 382, 352, 357, 'g'], [604, 310, 380, 352, 357, 'r'], [609, 272, 362, 320, 357, 'g'],
      [613, 288, 370, 320, 325, 'r'], [618, 300, 342, 314, 326, 'g'], [622, 283, 377, 325, 373, 'r'],
      [627, 320, 398, 320, 373, 'g'], [632, 130, 340, 246, 320, 'g'], [637, 162, 290, 246, 273, 'r'],
      [641, 172, 393, 273, 383, 'r'], [646, 383, 660, 383, 488, 'r'], [650, 431, 557, 503, 526, 'r'],
      [655, 335, 522, 335, 522, 'g'], [660, 198, 377, 288, 335, 'g'], [664, 130, 457, 204, 293, 'g'],
      [669, 130, 218, 130, 204, 'g'], [678, 130, 280, 130, 252, 'r'], [683, 252, 412, 252, 405, 'r'],
      [687, 405, 593, 405, 488, 'r'], [691, 467, 708, 488, 627, 'r'], [696, 575, 653, 594, 632, 'g'],
      [701, 573, 688, 599, 683, 'r'], [706, 588, 698, 604, 690, 'g'], [710, 610, 662, 631, 653, 'r'],
      [715, 620, 668, 642, 648, 'g'], [720, 583, 637, 603, 637, 'g'], [724, 583, 616, 583, 616, 'r'],
      [728, 552, 611, 557, 611, 'g'], [733, 557, 584, 557, 584, 'r'], [738, 555, 575, 562, 568, 'g'],
      [742, 557, 603, 557, 568, 'r'], [747, 547, 583, 557, 568, 'g'], [752, 546, 578, 562, 568, 'r'],
      [756, 542, 572, 562, 568, 'r'], [761, 545, 578, 552, 564, 'g'], [766, 499, 565, 531, 553, 'g'],
      [771, 535, 567, 536, 567, 'r'], [775, 537, 583, 567, 568, 'g'], [780, 515, 547, 530, 535, 'g'],
      [785, 515, 545, 515, 541, 'g'], [790, 218, 545, 218, 532, 'g'], [793, 130, 226, 177, 226, 'g'],
      [798, 130, 209, 167, 189, 'g'], [802, 167, 190, 172, 189, 'r'], [807, 177, 267, 188, 241, 'r'],
      [812, 230, 277, 240, 257, 'r'], [816, 235, 312, 257, 310, 'r'], [821, 272, 325, 298, 310, 'g'],
      [826, 288, 357, 298, 330, 'r'], [830, 320, 393, 325, 378, 'r'], [835, 357, 425, 362, 378, 'g'],
      [839, 367, 400, 367, 395, 'r'], [844, 325, 520, 388, 470, 'r'], [849, 430, 500, 430, 470, 'r'],
      [853, 378, 500, 409, 470, 'g'], [858, 325, 500, 404, 480, 'r'], [862, 325, 495, 430, 470, 'g'],
      [867, 352, 440, 409, 437, 'g'], [873, 130, 415, 193, 410, 'g'], [876, 130, 195, 130, 190, 'g'],
      [881, 130, 160, 130, 135, 'r'], [886, 140, 382, 140, 378, 'r'], [890, 342, 408, 342, 388, 'g'],
      [895, 130, 350, 130, 337, 'g'], [900, 130, 180, 130, 135, 'r'], [904, 130, 177, 130, 135, 'g'],
      [909, 130, 213, 130, 189, 'r'], [914, 130, 183, 130, 183, 'g'], [919, 130, 287, 130, 220, 'r'],
      [923, 210, 283, 240, 241, 'g'], [927, 240, 288, 240, 283, 'r'], [932, 283, 290, 283, 288, 'g'],
      [937, 610, 705, 610, 705, 'g'], [942, 562, 605, 562, 605, 'g'], [946, 546, 640, 562, 583, 'r'],
      [951, 583, 630, 583, 615, 'r'], [955, 598, 630, 610, 615, 'g'], [960, 610, 778, 610, 778, 'r'],
      [964, 710, 807, 710, 785, 'g'], [969, 695, 730, 705, 730, 'r'], [973, 673, 742, 710, 725, 'g'],
      [978, 626, 720, 684, 705, 'g'], [983, 660, 720, 684, 686, 'g'], [987, 657, 700, 668, 688, 'g'],
      [992, 673, 720, 673, 700, 'r'], [997, 400, 705, 425, 705, 'g'], [1001, 140, 415, 177, 415, 'g'],
      [1006, 140, 255, 172, 198, 'r'], [1010, 172, 297, 198, 252, 'r'], [1016, 140, 277, 204, 257, 'g'],
      [1021, 152, 293, 193, 289, 'r'], [1024, 205, 330, 230, 283, 'g'], [1029, 225, 367, 230, 362, 'r'],
      [1034, 352, 387, 357, 378, 'r'], [1038, 378, 503, 378, 463, 'r'], [1043, 455, 483, 463, 483, 'r'],
      [1047, 440, 547, 483, 547, 'r'], [1052, 510, 603, 510, 512, 'g'], [1057, 437, 615, 545, 563, 'g'],
      [1061, 442, 567, 442, 547, 'g'], [1066, 378, 558, 462, 558, 'r'], [1071, 325, 620, 563, 620, 'r'],
      [1075, 510, 693, 510, 512, 'g'], [1080, 497, 595, 547, 595, 'g'], [1085, 525, 662, 552, 573, 'r'],
      [1090, 310, 573, 330, 573, 'g'], [1094, 320, 430, 325, 362, 'r'], [1098, 346, 558, 352, 558, 'r'],
      [1103, 503, 590, 546, 558, 'g'], [1108, 347, 555, 400, 553, 'g']
    ];
    const LINES = [
      [245, 807, 540, 130, 2], [336, 807, 474, 490, 2], [379, 807, 421, 713, 2], [431, 512, 553, 130, 2],
      [367, 513, 497, 514, 2.6], [372, 573, 502, 574, 2.6], [142, 399, 1228, 416, 2.6], [432, 232, 497, 235, 2.6],
      [520, 302, 909, 293, 2.6], [783, 218, 1023, 209, 2.6], [913, 275, 1038, 277, 2.6], [637, 145, 740, 147, 2],
      [435, 315, 770, 792, 2], [786, 133, 1149, 652, 2], [770, 169, 786, 133, 2], [696, 720, 946, 158, 2],
      [766, 743, 987, 130, 2], [736, 807, 1108, 202, 2], [627, 723, 733, 417, 2], [645, 665, 712, 417, 2],
      [646, 683, 687, 130, 2], [692, 708, 710, 418, 2], [680, 130, 702, 540, 2], [575, 559, 1196, 566, 2.6],
      [681, 716, 1278, 726, 2.6], [936, 518, 1113, 507, 2.6], [966, 807, 1103, 389, 2]
    ];
    const NS = 'http://www.w3.org/2000/svg';
    function add(parent, tag, attrs) {
      const el = document.createElementNS(NS, tag);
      for (const k in attrs) el.setAttribute(k, attrs[k]);
      document.getElementById(parent).appendChild(el);
      return el;
    }
    for (const y of [181, 235, 287, 340, 393, 446, 498, 551, 604, 657, 710, 763]) {
      add('grid', 'path', { d: `M144 ${y + 0.5}H1535` });
    }
    for (const x of [354, 566, 779, 1205, 1417]) {
      add('grid', 'path', { d: `M${x + 0.5} 130V807` });
    }
    add('boxes', 'rect', { x: 298.5, y: 125, width: 208, height: 690, fill: '#80cbbf', stroke: '#089981' });
    add('boxes', 'rect', { x: 511.5, y: 125, width: 208.5, height: 574, fill: '#fdd1a4', stroke: '#ef5350' });
    add('boxes', 'rect', { x: 724.5, y: 125, width: 208, height: 532, fill: '#80cbbf', stroke: '#089981' });
    add('boxes', 'rect', { x: 936.5, y: 125, width: 176, height: 690, fill: '#80cbbf', stroke: '#089981' });
    for (const [x, wt, wb, bt, bb, c] of CANDLES) {
      const col = c === 'g' ? '#089981' : '#f23645';
      add('candles', 'rect', { x: x - 0.5, y: wt, width: 1, height: wb - wt, fill: col });
      add('candles', 'rect', { x: x - 1.75, y: bt, width: 3.5, height: Math.max(bb - bt, 1.5), fill: col });
    }
    for (const [x1, y1, x2, y2, w] of LINES) {
      add('lines', 'line', { x1, y1, x2, y2, 'stroke-width': w });
    }
    for (const cx of [1283, 1496]) {
      add('flags', 'circle', { cx, cy: 791, r: 12.5, fill: '#fff', stroke: '#e53935', 'stroke-width': 2 });
      add('flags', 'rect', { x: cx - 9, y: 782, width: 11, height: 9, fill: '#3f6fc8' });
      add('flags', 'rect', { x: cx + 2, y: 785, width: 8, height: 2, fill: '#e53935' });
      add('flags', 'rect', { x: cx + 2, y: 790, width: 9, height: 2, fill: '#e53935' });
      add('flags', 'rect', { x: cx - 9, y: 795, width: 19, height: 2, fill: '#e53935' });
    }
  </script>
</body>

</html>
